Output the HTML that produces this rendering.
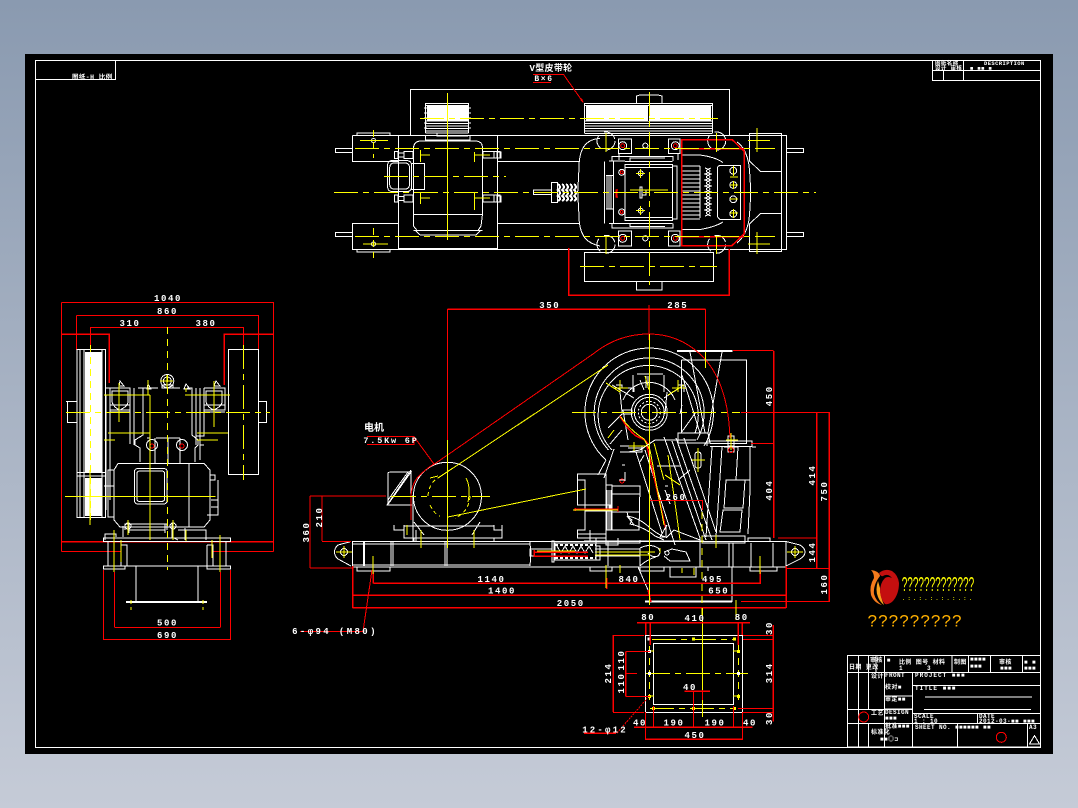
<!DOCTYPE html>
<html><head><meta charset="utf-8"><title>CAD drawing</title>
<style>
html,body{margin:0;padding:0;width:1078px;height:808px;overflow:hidden;background:linear-gradient(180deg,#8a9ab0 0%,#c5cbd7 100%)}
svg{position:absolute;left:0;top:0;display:block}
.w{fill:none;stroke:#fff;stroke-width:1}
.W{fill:none;stroke:#fff;stroke-width:1}
.T{fill:none;stroke:#fff;stroke-width:2}
.y{fill:none;stroke:#ff0;stroke-width:1}
.d{fill:none;stroke:#ff0;stroke-width:1;stroke-dasharray:24 5 6 5}
.e{fill:none;stroke:#ff0;stroke-width:1;stroke-dasharray:7 5}
.r{fill:none;stroke:#f00;stroke-width:1}
.R{fill:none;stroke:#f00;stroke-width:1.5}
text{font-family:"Liberation Mono","Noto Sans CJK SC",monospace;font-weight:700;font-size:9px;fill:#fff;text-anchor:middle;letter-spacing:1.6px}
.s{font-size:6px;letter-spacing:.4px;text-anchor:start}
</style></head><body>
<svg width="1078" height="808" viewBox="0 0 1078 808" xmlns="http://www.w3.org/2000/svg" shape-rendering="crispEdges">
<rect x="25" y="54" width="1028" height="700" fill="#000"/>

<!-- frame -->
<path class="W" d="M35.500 60.500H1040.500V747.500H35.500Z"/>
<path class="W" d="M35.500 79.500H115.500V60.500"/>
<path class="w" d="M932.500 60.500V80.500H1040M932.500 70.500H1040M943.500 70.500V80.500M963.500 60.500V80.500"/>
<text class="s" x="72" y="79" style="font-size:6.500px">图纸-H 比例</text>
<text class="s" x="935" y="65" style="font-size:5.500px">图纸名称</text>
<text class="s" x="984" y="65" style="font-size:5.500px">DESCRIPTION</text>
<text class="s" x="935" y="70" style="font-size:5.500px">设计 审核</text>
<text class="s" x="970" y="70" style="font-size:5.500px">■ ■■ ■</text>

<!-- ============ TOP VIEW ============ -->
<g>
<path class="w" d="M410.500 135V89.500H729.500V135"/>
<path class="W" d="M352.500 135.500H786.500V249.500H352.500V223.500H398.500M352.500 135.500V161.500H398.500"/>
<path class="w" d="M335.500 148.500H352.500V152.500H335.500ZM335.500 232.500H352.500V236.500H335.500ZM786.500 148.500H803.500V152.500H786.500ZM786.500 232.500H803.500V236.500H786.500Z"/>
<path class="w" d="M357 135V133H390V135M357 249.500V252H390V249.500"/>
<path class="W" d="M398.500 136V248.700H497.700V136"/>
<path class="w" d="M497.700 161.500H579M497.700 223.500H579"/>
<path class="w" d="M749.500 133.500H781.500V171.500H760.500L749.500 161V133.500ZM749.500 251.500H781.500V213.500H760.500L749.500 224V251.500Z"/>
<path class="w" d="M781.500 135.500V249.500"/>
<rect x="427" y="106" width="41" height="14.500" fill="#fff"/>
<path class="w" d="M425.500 103.500H468.500V105.500H425.500ZM425.500 106V133M468.500 106V133M426 121H468M426 123.500H468M426 126H468M426 128.500H468M425.500 131H468.500M425.500 133H468.500"/>
<path class="w" d="M424 108H427M424 113H427M424 118H427M424 123H427M424 128H427M468 108H471M468 113H471M468 118H471M468 123H471M468 128H471"/>
<path class="w" d="M437 133V136H468M425.500 136V140H470V136"/>
<rect x="586" y="106" width="125" height="15" fill="#fff"/>
<path class="w" d="M584.500 103.500H712.500V105.500H584.500ZM584.500 106V133M712.500 106V133M585 121H712M585 123.500H712M585 126H712M585 128.500H712M584.500 131H712.500M584.500 133.500H712.500"/>
<path stroke="#000" stroke-width="1" d="M648.500 106V121"/>
<path class="w" d="M636.500 103V96L640 95H658L662 96V103M584.500 252.500H713.500V281.500H584.500ZM636.500 281.500V290H662V281.500"/>
<path class="w" d="M413.500 214V148Q414 141 421 141H475Q482.500 141 482.500 148V214L481 226L478 230.500H417L413.500 226ZM413.500 214.500H482.500M413.500 230.500H482.500M420 235H476L480 231M420 235L416 231"/>
<path class="w" d="M387.500 165Q388 160.500 392 160.500H407Q411.500 161 411.500 165V187Q411.500 191.500 407 191.500H392Q388 191.500 387.500 187ZM389.500 168Q390 163 394 163H405Q409.500 163 409.500 168V184Q409.500 189 405 189H394Q390 189 389.500 184ZM411.500 163.500H424.500V189.500H411.500Z"/>
<path class="w" d="M394.500 151.500H398V158.500H394.500ZM398 153H404V157H398ZM404 151.500H413V158.500H404ZM483 151.500H494V158H483ZM494 151.500H500V158H494ZM497 152V158H501V152ZM394.500 195H398V202H394.500ZM398 196.500H404V200.500H398ZM404 195H413V202H404ZM483 195H494V202H483ZM494 195H500V202H494ZM497 196V202H501V196Z"/>
<path class="w" d="M533.500 190H551.500V194.500H533.500ZM551.500 182.500H557.500V202.500H551.500Z"/>
<path d="M558 184Q562 187 558 190Q562 193 558 196Q562 199 558 201M562 184Q566 187 562 190Q566 193 562 196Q566 199 562 201M566 184Q570 187 566 190Q570 193 566 196Q570 199 566 201M570 184Q574 187 570 190Q574 193 570 196Q574 199 570 201M574 184Q578 187 574 190Q578 193 574 196Q578 199 574 201" class="T"/>
<path class="w" d="M600 138.500Q587 139 582 150Q579 157 579 168L577.700 192L579 216Q579 230 585 238Q590 244 600 246"/>
<path class="w" d="M737 142Q746 148 749 165Q750.500 180 750.500 192Q750.500 205 749 220Q746 236 737 243"/>
<path class="w" d="M625 164.500H672.500V220.500H625ZM625 167.500H672.500M625 217.500H672.500M672.500 166H677V219H672.500"/>
<path class="w" d="M609 161H625M609 223.500H625M612 161V156.500H673V161M612 223.500V228H673V223.500M625 161.500H672.500M625 223.500H672.500M630 161V158H665M630 224V226.500H665"/>
<path class="w" d="M604.500 161.500V223.500M613.500 161.500V223.500M606 175.500H613M606 209H613M607 176V209M609 176V209M611 176V209"/>
<path class="w" d="M681.500 155H700Q715 157 723 162.500M681.500 229.500H700Q715 227 723 222M681 166H700M681 171H700M681 175H700M681 179H700M681 183H700M681 187H700M681 191H700M681 195H700M681 199H700M681 203H700M681 207H700M681 211H700M681 215H700M681 219H700"/>
<path class="w" d="M700 166V218M705 168Q715 171 705 174Q715 177 705 180Q715 183 705 186Q715 189 705 192Q715 195 705 198Q715 201 705 204Q715 207 705 210Q715 213 705 216M711 168Q702 171 711 174Q702 177 711 180Q702 183 711 186Q702 189 711 192Q702 195 711 198Q702 201 711 204Q702 207 711 210Q702 213 711 216"/>
<path class="w" d="M717.700 167Q718 166 720 165.500H740.700V219.500H720L717.700 217Z"/>
<path class="w" d="M618.500 139H631.500V153.500H618.500ZM668.500 139H680V153.500H668.500ZM618.500 231H631.500V246H618.500ZM668.500 231H680V246H668.500ZM619 160V153M678 160V154"/>
<circle class="w" cx="622.700" cy="145.700" r="4"/><circle class="w" cx="675.300" cy="145.700" r="4"/><circle class="w" cx="622.700" cy="238.300" r="4"/><circle class="w" cx="675.300" cy="238.300" r="4"/>
<circle class="r" cx="622.700" cy="145.700" r="2"/><circle class="r" cx="675.300" cy="145.700" r="2"/><circle class="r" cx="622.700" cy="238.300" r="2"/><circle class="r" cx="675.300" cy="238.300" r="2"/>
<circle class="w" cx="645.300" cy="145.700" r="2.600"/><circle class="w" cx="645.300" cy="238.300" r="2.600"/>
<circle class="w" cx="621.700" cy="172.300" r="3"/><circle class="w" cx="621.700" cy="212" r="3"/>
<circle class="r" cx="621.700" cy="172.300" r="1.400"/><circle class="r" cx="621.700" cy="212" r="1.400"/>
<circle class="w" cx="640.700" cy="173.300" r="2.400"/><circle class="w" cx="640.700" cy="210.700" r="2.400"/>
<path class="w" d="M640 187V198H642V187ZM642 190H646V195H642Z"/>
<path class="r" d="M618 190H616V197H618M617 189V198"/>
<circle class="w" cx="733.300" cy="170.700" r="3.400"/><circle class="w" cx="733.300" cy="185" r="3.400"/><circle class="w" cx="733.300" cy="199.300" r="3.400"/><circle class="w" cx="733.300" cy="213.700" r="3.400"/>
<circle class="w" cx="606" cy="141" r="9" stroke-dasharray="14 6"/><circle class="w" cx="606" cy="244.300" r="9" stroke-dasharray="14 6"/>
<circle class="w" cx="716.700" cy="141" r="9" stroke-dasharray="14 6"/><circle class="w" cx="716.700" cy="244.300" r="9" stroke-dasharray="14 6"/>
<circle class="w" cx="373.500" cy="140.500" r="2"/><circle class="w" cx="373.500" cy="244" r="2"/>
<path class="R" d="M681.500 139.500H732L744 151V234L732 245.500H681.500ZM681.500 148.500H744M681.500 236.500H744"/>
<path class="R" d="M568.700 248V295.300H729.300V249"/>
<path class="r" d="M533 74.500H563.500L583.300 102.500M533 82.500H551"/>
<path d="M583.300 102.500L580 100L582 98Z" fill="#f00"/>
<path class="d" d="M334 192.300H816"/>
<path class="d" d="M420 118.300H718"/>
<path class="d" d="M355 148.300H775"/>
<path class="d" d="M355 236.300H775"/>
<path class="d" d="M384 176.300H506"/>
<path class="d" d="M580 266.300H717"/>
<path class="y" d="M447.500 93V240"/>
<path class="d" d="M649.500 92V285"/>
<path class="e" d="M373.500 130V158M373.500 228V258"/>
<path class="y" d="M360 140.500H388M363 244H388M420 155H430M420 198H430M475 155H490M475 198H490"/>
<path class="y" d="M420.500 150V162M474.500 152V162M420.500 192V204M474.500 192V210"/>
<path class="y" d="M606 133V152M606 236V254M716.700 133V152M716.700 236V254M730 177H738M730 185H738M730 199H738M730 213H738M733.300 166V176M733.300 181V189M733.300 209V218M748 140.500H770M748 244H770M757 128V152M757 232V254"/>
<path class="y" d="M636 173.300H645M636 210.700H645M640.700 169V178M640.700 206V215M630 190H668"/>
<text x="551" y="71" style="font-size:9px;letter-spacing:.3px">V型皮带轮</text>
<text x="544" y="81" style="font-size:8px">B×6</text>
</g>

<!-- ============ SIDE VIEW ============ -->
<g>
<path class="W" d="M352.500 541.500H786V567H352.500Z"/>
<path class="w" d="M352.500 544H530M352.500 565H530M351 541.500L338 545Q334.500 548 334.500 552Q334.500 556 338 559L351 566"/>
<path class="w" d="M786 541.500L800 545Q805 548 805 552Q805 556 800 559L786 566"/>
<circle class="w" cx="344" cy="552" r="3.500"/><circle class="w" cx="795" cy="552" r="3.500"/>
<path class="T" d="M364 542V566"/>
<path class="w" d="M393 542V566M447 542V566M391 542V566M445 542V566"/>
<path class="w" d="M530 541V544L531 552L530 566M357 567V571H390V567M590 567V571H612V567M640 567V571H664V567M708 567V571M750 567V571H777V567M770 541V538H748V541"/>
<path class="w" d="M700 543V567M729 543V567M733 543V567M751 543V567M773 543V567"/>
<path class="w" d="M670 567V577H696V567"/>
<circle class="w" cx="447.400" cy="496.300" r="34"/>
<path class="y" d="M428 496Q429 482 440 477M470 496Q469 512 455 518M430 505Q435 515 440 516" stroke-dasharray="4 3"/>
<path class="y" d="M430 478L438 476M466 478Q471 487 468 502"/>
<path class="w" d="M388 473Q388 472 392 472H411L387.500 505H412M388 473V505M411 471V497M411 470L387 505M408 472L388 500"/>
<path class="w" d="M404 526H494M394 525V530H404V525M494 525V530H502V525M404 528V538H502V528M414 522L424 535M480 522L472 535M414 538V542M494 538V542M398 541.500H498"/>
<path class="w" d="M413 495V541M416 530V541"/>
<path class="W" d="M577.500 474H606V534H577.500V530H585V505H577.500V483H577.500ZM577.500 474V480H585V505M577.500 530V538H606"/>
<path class="w" d="M606 485H612V530H606M607 490V530M609 490V530M611 490V530M612 486H640L639 530H612M612 494H640M612 512H640M606 538V545H618V538"/>
<path class="w" d="M585 505H610V511H585Z"/>
<path class="R" d="M575 509H618M575 511V508"/>
<path class="r" d="M618 506V512"/>
<path class="y" d="M573 510H618"/>
<path class="w" d="M606 460A64.300 64.300 0 1 1 704 446"/>
<path class="w" d="M608.500 450A55 55 0 1 1 697 440"/>
<path class="w" d="M612 450A50 50 0 1 1 695 433"/>
<circle class="w" cx="649.300" cy="412.300" r="18"/>
<circle class="w" cx="649.300" cy="412.300" r="15"/>
<circle class="w" cx="649.300" cy="412.300" r="11" stroke-dasharray="2 2"/>
<circle class="w" cx="649.300" cy="412.300" r="8"/>
<path class="w" d="M623 400A28 28 0 0 1 675 400M680 414L682 405M623 410L628 440M606 460L598 475M614 449L604 478"/>
<path class="w" d="M612 385L634 398M684 385L664 398M608 428L622 414M610 444L622 430M616 385H622V388H634V392M678 385H684V392M633 375V392M664 375V392M637 374H663"/>
<path class="w" d="M640 380L644 390M646 376V388M648 376V388M620 392L622 412M622 410H632V414H622M667 392L665 414"/>
<path class="y" d="M606 383L620 392M684 385L668 395M608 438L614 430M645 376L649 390"/>
<path class="y" d="M620 380V392M678 380V392M614 388H628M672 388H686"/>
<path class="T" d="M677 351H732.700"/>
<path class="w" d="M681.500 360H746.500V443.500H710M681.500 360V433M690 352L705 433M722 352L708 433M678 433H708L710 443H678V433ZM681 433L696 412M682 375L700 433"/>
<path class="w" d="M710 446.500H752V441H707V446M712 447L706 537M722 447L716 537M752 447L756 447M750 447V490L748 534M724 447H738L736 480H750M726 480H745L743 508H724ZM723 510H742L740 532H720Z"/>
<path class="w" d="M702 536H745V543H702ZM700 538V545"/>
<path class="r" d="M733 350.500H773.500M751 443.500H773.500M741 412.300H829M778 538H816.500M786 568.300H829M741 601.700H829"/>
<path class="w" d="M728 436V446H734V436ZM728 447V452H734V447"/>
<circle class="r" cx="731" cy="450" r="2.500"/>
<path class="y" d="M731 433V450M726 440H738"/>
<path class="w" d="M628 452L640 450L655 440H696M628 448H644M620 446H642V452H620"/>
<path class="w" d="M636 452L662 533M645 450L675 545M664 437L700 538M672 441L706 540M676 438L712 540M684 438L716 532M690 470L678 480M657 466H680M665 486H668M665 490L670 504M666 538L674 530L700 540M622 465H625M625 472V481"/>
<path class="w" d="M640 462L644 455"/>
<path d="M648 444L645 440 636 436Q628 430 620 416M647 446L666 530" class="R" stroke-width="1.800"/>
<path class="y" d="M621 417Q630 430 644 439L650 450L664 525" stroke-width=".8" fill="none" stroke="#ff0"/>
<path class="w" d="M667 525L660 537H666V525"/>
<path class="y" d="M654 443L664 480M668 455L676 510L680 540M665 475L680 485"/>
<path class="y" d="M629 446H646M634 442V451"/>
<path class="w" d="M627 512Q628 518 632 520L630 524L634 525L627 516M627 516Q640 518 650 528Q660 536 666 537M634 525Q645 528 655 536L664 540M640 540V543H596V538M596 541H704M606 530V541"/>
<path class="w" d="M584 541H608V566M590 541V530"/>
<path class="w" d="M640 548Q650 543 658 548Q662 552 658 556Q652 558 648 553M640 548L640 566M658 556Q646 560 640 566M664 552L672 549L686 552L690 561H670L664 556"/>
<circle class="w" cx="667" cy="553" r="2"/>
<path class="w" d="M595 549H640M595 556H640"/>
<path class="y" d="M595 552H655"/>
<path class="w" d="M552 541V562H554V541ZM555 543H596V560H555ZM530 549H552V556H530ZM596 546H600V560H596"/>
<path class="T" d="M555 545H596M555 558H596" stroke-dasharray="3 2"/>
<path class="w" d="M557 546L561 553L565 546L569 553L573 546L577 553L581 546L585 553L589 546L593 553"/>
<path class="R" d="M534 552H588M534 550V556H588"/>
<path class="y" d="M537 551H575M595 555H650"/>
<path class="w" d="M695 455Q695 452 698 452Q701 452 701 455V465Q701 468 698 468Q695 468 695 465Z"/>
<path class="y" d="M698 448V472M692 460H705"/>
<circle class="r" cx="622" cy="481" r="2"/>
<path class="w" d="M619 480H625"/>
<path class="w" d="M638 567L648 590"/>
<path class="T" d="M645 601.700H732"/>
<path class="w" d="M732 567V602"/>
<path class="R" d="M648 590L651 602"/>
<path class="r" d="M411 520V496Q412 482 420 475Q428 467 436 463L593 354Q618 334 649 334Q678 334 700 354Q728 380 730 438"/>
<path class="y" d="M608 365L438 478M448 517L586 489"/>
<path class="R" d="M447.400 309.300H705.600"/>
<path class="r" d="M447.500 309V460M705.500 309V350M649 305V340"/>
<path class="y" d="M705.500 352V368"/>
<path class="R" d="M773.500 351V538M816.500 412V568M829 412V602"/>
<path class="r" d="M310 496V568M386 496H310M322 496.300V538M322 538V541M322 541.500H351M310 568H352"/>
<path class="R" d="M373.300 583.300H760.400V570M373.300 583.300V572M606.500 578V589M352.500 595.300H786M352.500 607.700H786M352.500 566V608M786 566V608"/>
<path class="r" d="M649 500.500H702.500V510"/>
<path class="r" d="M372 570L363 631.700H300"/>
<path class="r" d="M367 444.300H414V436.700H367M414 436.700L434 464"/>
<path class="y" d="M391 496.300H412M447.500 440V548"/>
<path class="d" d="M392 496.300H490"/>
<path class="y" d="M649.300 334V560"/>
<path class="d" d="M572 412.300H740"/>
<path class="y" d="M649.300 560V605"/>
<path class="e" d="M702 512V620"/>
<path class="y" d="M344 546V558M336 552H352M795 546V558M787 552H803M373 556V574M760 556V574M660 548V553M421 530V548M474 530V548M407 525V535M620 565V573M606 565V588M694 568V575M682 568V573M716 535V548"/>
<text x="374" y="431" style="font-size:10px;letter-spacing:0">电机</text>
<text x="391" y="443" style="font-size:8.500px;letter-spacing:1.800px">7.5Kw 6P</text>
<text x="549.700" y="308">350</text><text x="677.800" y="308">285</text>
<text x="491.500" y="582">1140</text><text x="629" y="582">840</text><text x="712.500" y="582">495</text>
<text x="502" y="593.500">1400</text><text x="718.700" y="593.500">650</text><text x="570.700" y="606">2050</text>
<text x="676" y="500">260</text>
<text x="335" y="634" style="letter-spacing:2.400px;font-size:9px">6-φ94 (M80)</text>
<text transform="translate(309,532) rotate(-90)">360</text>
<text transform="translate(322,517) rotate(-90)">210</text>
<text transform="translate(772,395.700) rotate(-90)">450</text>
<text transform="translate(772,490) rotate(-90)">404</text>
<text transform="translate(815,475) rotate(-90)">414</text>
<text transform="translate(827,491) rotate(-90)">750</text>
<text transform="translate(815,552) rotate(-90)">144</text>
<text transform="translate(827,584) rotate(-90)">160</text>
</g>

<!-- ============ LEFT VIEW ============ -->
<g>
<path class="r" d="M61.500 302.700H273.500V551.700M61.500 302.700V551.700M76.700 315.300H258.300V350M76.700 315.300V350M90.700 327.300H243.300M90.700 327V345M243.300 327V345"/>
<path class="R" d="M61.500 334.300H109.300V383M273.500 334.300H224.300V385M61.500 541.700H273.500"/>
<path class="r" d="M61.500 551.700H121M212.700 551.700H273.500"/>
<path class="r" d="M114.300 627.300H220.300M114.300 572V627M220.300 572V627M103.300 639.300H230.300M103.300 570V640M230.300 570V640"/>
<rect x="85" y="352" width="17" height="120" fill="#fff"/><rect x="85" y="478" width="17" height="38" fill="#fff"/>
<path class="W" d="M77 349.500H105.500V517.500H77ZM84 350V517M102 350V517M80 350V517M86 472H100M77 472.500H105.500M77 476H105.500"/>
<path class="w" d="M66 401.700H77M67.300 401.700V422.700H77"/>
<path class="W" d="M228.500 349.500H258.500V474.500H228.500Z"/>
<path class="w" d="M258.700 401.700H266.700V422.700H258.700"/>
<path class="w" d="M106 388H110V500M106 395V510"/>
<path class="w" d="M110 388H130V410H110M112 391V402Q114 408 120 410Q128 406 128 402V391ZM110 405H130M110 410H130M110 412H130"/>
<path class="w" d="M204 388H225V410H204M206 391V402Q208 408 214 410Q222 406 222 402V391ZM204 405H225M204 410H225M204 412H225"/>
<path class="w" d="M130 388V444M134 388V445M138 388H143V435L135 440V445L140 448V462M143 388L150 388H158M165 388H180M187 388H192V435L198 440V445L195 448V462M196 388V445M200 388V445H204M204 388V436H196"/>
<path class="w" d="M150 445V463M200 440V460M180 438V463M155 438V463M156 438H180M168 438V463M147 438H150"/>
<path class="w" d="M119 386L120 381L124 386ZM116 388H124M147 389L148 384L151 389ZM184 389L186 384L190 389ZM214 386L216 381L220 386Z"/>
<circle class="w" cx="167.300" cy="381" r="6.500"/><circle class="w" cx="167.300" cy="381" r="4"/>
<path class="w" d="M162 388H173V385H162Z"/>
<circle class="w" cx="152" cy="445" r="5.500"/><circle class="w" cx="182" cy="445" r="5.500"/>
<circle class="r" cx="152" cy="446" r="2"/><circle class="r" cx="182" cy="446" r="2"/>
<path class="W" d="M118 463.500H204L210 470V520L204 527H120L114 520V470Z"/>
<path class="w" d="M134.500 471Q135 468.500 138 468.500H163Q167 468.500 167 471V501Q167 504 163 504H138Q135 504 134.500 501ZM137 473Q137 471 140 471H161Q164.500 471 164.500 473V499Q164.500 501.500 161 501.500H140Q137 501.500 137 499ZM189 463.500V527M210 475H215V480H210M211 500H218V507H211M218 480V515H207M114 470H108V517H114M104 486H114V517"/>
<path class="w" d="M125 530V524H167V530M129 524V533M165 524V533M129 530H165M123 526V537M172 523V537L178 540M185 528V540M178 530H206V540M105 540V534H116V537"/>
<path class="W" d="M103.500 538H230.500V541.500H103.500ZM103.500 566H125V569H103.500ZM207 566H230.500V569H207Z"/>
<path class="w" d="M108 541V566M226 541V566M121 545V566H127V545H121M207 545V566H213V545H207M125 566H207"/>
<path class="T" d="M126 602H207"/>
<path class="w" d="M136 566V602M198 566V602"/>
<circle class="w" cx="128" cy="526" r="3"/><circle class="w" cx="173" cy="526" r="3"/>
<path class="d" d="M66 412.300H270"/>
<path class="y" d="M65 496.300H215.700"/>
<path class="e" d="M167.300 327V570"/>
<path class="e" d="M90.300 345V525"/>
<path class="d" d="M243.300 345V480"/>
<path class="y" d="M90 470V525M150 395V540"/>
<path class="y" d="M148 380V395M119 383V422M214 381V427M104 395H150M185 395H230M108 433H150M197 433H228M104 440H115M197 440H218M173 381H160M167 375V388M186 388V392"/>
<path class="y" d="M114 530V572M220 535V572M128 520V535M173 520V540M121 540V562M212 540V558M186 530V541"/>
<path class="y" d="M131 600V610M203 600V610" stroke-dasharray="4 3"/>
<text x="168" y="301">1040</text><text x="167.500" y="314">860</text>
<text x="130" y="326">310</text><text x="206" y="326">380</text>
<text x="167.500" y="625.500">500</text><text x="167.500" y="638">690</text>
</g>

<!-- ============ FEED OPENING ============ -->
<g>
<path class="W" d="M645.500 635.500H742.500V712.500H645.500Z"/>
<path class="w" d="M653.500 643.500H733.500V704.500H653.500Z"/>
<path class="d" d="M652 639.500H735M650 708.500H735M646 673.500H748"/>
<path class="y" d="M702.500 608V717"/>
<path class="e" d="M649.500 646V700M738.500 646V700"/>
<path class="y" d="M649 651H654M733 651H740M733 696H740M649 696H654M738.500 640V650M736 600V620"/>
<rect x="647.500" y="637.500" width="3" height="3" fill="#fff"/><rect x="692" y="637.500" width="3" height="3" fill="#ff0"/><rect x="733" y="637.500" width="3" height="3" fill="#ff0"/><rect x="648" y="650" width="3" height="3" fill="#fff"/><rect x="648" y="672" width="3" height="3" fill="#fff"/><rect x="737" y="650" width="3" height="3" fill="#ff0"/><rect x="737" y="672" width="3" height="3" fill="#fff"/><rect x="648" y="695" width="3" height="3" fill="#ff0"/><rect x="652" y="707" width="3" height="3" fill="#ff0"/><rect x="692" y="707" width="3" height="3" fill="#ff0"/><rect x="733" y="707" width="3" height="3" fill="#ff0"/><rect x="737" y="695" width="3" height="3" fill="#ff0"/>
<path class="R" d="M637 622.500H750M645.500 622V635M650 622V645M738 622V645M742 622V635"/>
<path class="R" d="M773.300 625V721.700M613.300 635V712M625.700 651.700V696.700M634 727H752.700M645.300 739.300H742.700M684.300 691H710"/>
<path class="r" d="M743 635.500H773M743 639.500H773M738 708.500H773M743 712.500H773M613 635.500H644M613 712.500H644M626 651.700H650M626 696.700H650M626 673.500H637M693.500 691V727M653.500 706V727M733.500 706V727M702.500 690V700M645.300 712V740M742.700 712V740"/>
<path class="r" d="M584 733.300H616.700L647.300 698.300" stroke-dasharray="2 1"/>
<path class="R" d="M584 733.300H616"/>
<text x="648.300" y="620">80</text><text x="695" y="621">410</text><text x="741.700" y="620">80</text>
<text x="690" y="690">40</text>
<text x="640" y="725.500">40</text><text x="674" y="725.500">190</text><text x="715" y="725.500">190</text><text x="750" y="725.500">40</text>
<text x="695" y="738">450</text><text x="605" y="732.500" style="letter-spacing:2.200px">12-φ12</text>
<text transform="translate(772,628) rotate(-90)">30</text>
<text transform="translate(772,672.700) rotate(-90)">314</text>
<text transform="translate(772,718) rotate(-90)">30</text>
<text transform="translate(611,673) rotate(-90)">214</text>
<text transform="translate(624,660) rotate(-90)">110</text>
<text transform="translate(624,683) rotate(-90)">110</text>
</g>

<!-- ============ LOGO ============ -->
<g shape-rendering="geometricPrecision">
<path d="M871 570Q879 571 880 576Q873 585 874 594Q876 601 882 605Q874 603 871 595Q869 586 874 578Q874 573 871 570Z" fill="#f47a1c"/>
<path d="M878 581Q875 590 878 597Q880 602 884 605Q880 596 880 588Z" fill="#f9a01b"/>
<path d="M879 573Q885 568 892 571Q898 575 899 583Q899 594 893 601Q889 605 885 604Q881 600 880 592Q880 583 885 578Q888 576 892 578Q888 573 883 576Q881 577 879 573Z" fill="#c40f0f"/>
<text x="901.700" y="591" textLength="72.500" lengthAdjust="spacingAndGlyphs" style="font-family:'Liberation Sans',sans-serif;font-weight:400;font-size:20px;fill:#ff0;text-anchor:start;letter-spacing:0">?????????????</text>
<text x="902" y="600" textLength="70" lengthAdjust="spacing" style="font-size:5px;fill:#ff0;text-anchor:start;letter-spacing:0">.:.:.:.:.:.:.</text>
<text x="867.500" y="626.500" textLength="94" lengthAdjust="spacing" style="font-family:'Liberation Sans',sans-serif;font-weight:400;font-size:17px;fill:#ffb000;text-anchor:start;letter-spacing:0">?????????</text>
</g>

<!-- ============ TITLE BLOCK ============ -->
<g>
<path class="W" d="M847.500 655.700H1040.500V747H847.500Z"/>
<path class="w" d="M847.500 672.700H1040.500M912.700 685.300H1040.500M912.700 713.300H1040.500M847.500 709.300H912.700M847.500 723.300H1040.500M858.700 655.700V747M868.700 655.700V672.700M868.700 723.300V747M876 655.700V672.700M884.300 655.700V747M912.700 672.700V747M952 655.700V672.700M968.700 655.700V672.700M990.300 655.700V672.700M1022.300 655.700V672.700M957.300 723.300V747M977.300 713.300V723.300M1027.300 723.300V747M868.700 672.700V709M884.300 696H912.700M884.300 709H912.700M925 697H1032M924 709.300H1031"/>
<circle class="r" cx="863.700" cy="717" r="5"/>
<circle class="r" cx="1001.300" cy="737.300" r="5"/>
<path class="w" d="M1029.500 744L1034.500 735.500L1039.500 744Z"/>
<g style="font-size:6px">
<text class="s" x="849" y="669">日期 更改</text>
<text class="s" x="870" y="662">审核 ■</text>
<text class="s" x="899" y="664">比例 图号 材料</text>
<text class="s" x="899" y="670">1 &#160;&#160;&#160;&#160; 3</text>
<text class="s" x="954" y="664">制图</text>
<text class="s" x="970" y="661">■■■■</text>
<text class="s" x="970" y="668">■■■</text>
<text class="s" x="999" y="664">审核</text><text class="s" x="1000" y="670">■■■</text>
<text class="s" x="1024" y="664">■ ■</text><text class="s" x="1024" y="670">■■■</text>
<text class="s" x="871" y="678">设计</text>
<text class="s" x="885" y="677">FRONT</text>
<text class="s" x="915" y="677" style="letter-spacing:1px">PROJECT ■■■</text>
<text class="s" x="885" y="689">校对■</text>
<text class="s" x="915" y="690" style="letter-spacing:1px">TITLE ■■■</text>
<text class="s" x="885" y="701">审定■■</text>
<text class="s" x="871" y="715">工艺</text>
<text class="s" x="885" y="714">DESIGN</text>
<text class="s" x="885" y="720">■■■</text>
<text class="s" x="914" y="718">SCALE</text><text class="s" x="914" y="723">1 : 10</text>
<text class="s" x="979" y="718">DATE</text><text class="s" x="979" y="723">2012-03-■■ ■■■</text>
<text class="s" x="885" y="728">批准■■■</text>
<text class="s" x="871" y="734">标准化</text>
<text class="s" x="915" y="729">SHEET NO. ■■■■■■ ■■</text>
<text class="s" x="1029" y="729">A3</text>
<text class="s" x="880" y="741">■■◎⊐</text>
</g>
</g>
</svg>
</body></html>
